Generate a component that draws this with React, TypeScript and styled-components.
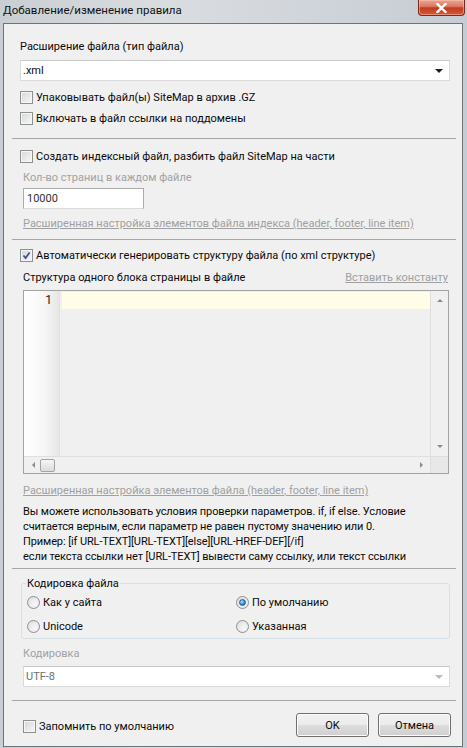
import styled, { createGlobalStyle } from "styled-components";

const GlobalStyle = createGlobalStyle`
  html, body {
    margin: 0;
    padding: 0;
    background: #d3d7db;
  }
  body {
    font-family: Roboto, "Noto Sans", sans-serif;
    font-size: 11px;
    color: #0a0a0a;
  }
`;

const Window = styled.div`
  width: 467px;
  height: 748px;
  box-sizing: border-box;
  display: flex;
  flex-direction: column;
  padding: 0 4px 1px 3px;
  background: linear-gradient(90deg, #c9ced4 0%, #dadde0 35%, #cfd4da 70%, #c6ccd3 100%);
`;

const TitleBar = styled.div`
  height: 23px;
  display: flex;
  align-items: flex-start;
`;

const Title = styled.div`
  font-size: 11.5px;
  line-height: 20px;
  color: #111;
`;

const CloseButton = styled.div`
  margin-left: auto;
  margin-right: -2px;
  width: 47px;
  height: 16px;
  box-sizing: border-box;
  border: 1px solid #7a2a1b;
  border-top: none;
  border-radius: 0 0 4px 4px;
  background: linear-gradient(#eba897 0%, #d9745d 45%, #c23c20 52%, #d4583a 100%);
  box-shadow: inset 0 0 0 1px rgba(255, 200, 180, 0.5);
  display: flex;
  align-items: center;
  justify-content: center;
`;

const Client = styled.div`
  flex: 1;
  display: flex;
  flex-direction: column;
  background: #f0f0f0;
  border: 1px solid #6e7378;
`;

const Section = styled.div<{ $pt?: number }>`
  display: flex;
  flex-direction: column;
  padding: ${(p) => p.$pt ?? 0}px 12px 0 16px;
`;

const Separator = styled.div<{ $mt: number }>`
  margin: ${(p) => p.$mt}px 6px 0 8px;
  border-top: 1px solid #a6a6a6;
`;

const Label = styled.div<{ $mt?: number; $disabled?: boolean; $indent?: boolean }>`
  margin-top: ${(p) => p.$mt ?? 0}px;
  margin-left: ${(p) => (p.$indent ? 3 : 0)}px;
  line-height: 15px;
  color: ${(p) => (p.$disabled ? "#a2a2a2" : "#0a0a0a")};
  white-space: nowrap;
`;

const LinkText = styled.span<{ $mt?: number }>`
  align-self: flex-start;
  margin-top: ${(p) => p.$mt ?? 0}px;
  margin-left: 3px;
  line-height: 15px;
  color: #a0a0a0;
  text-decoration: underline;
  white-space: nowrap;
`;

const Combo = styled.div<{ $mt: number; $disabled?: boolean; $indent?: boolean }>`
  margin-top: ${(p) => p.$mt}px;
  margin-left: ${(p) => (p.$indent ? 3 : 0)}px;
  height: 21px;
  box-sizing: border-box;
  display: flex;
  align-items: center;
  padding: 0 6px 0 2px;
  background: #fff;
  border: 1px solid #dadada;
  border-top-color: #c8c8c8;
  color: ${(p) => (p.$disabled ? "#6d6d6d" : "#0a0a0a")};
`;

const ComboText = styled.span`
  flex: 1;
`;

const Arrow = styled.span<{ $dir: "down" | "up" | "left" | "right"; $color?: string; $size?: number }>`
  width: 0;
  height: 0;
  ${(p) => {
    const s = p.$size ?? 4;
    const c = p.$color ?? "#1e1e1e";
    if (p.$dir === "down")
      return `border-left: ${s}px solid transparent; border-right: ${s}px solid transparent; border-top: ${s}px solid ${c};`;
    if (p.$dir === "up")
      return `border-left: ${s}px solid transparent; border-right: ${s}px solid transparent; border-bottom: ${s}px solid ${c};`;
    if (p.$dir === "left")
      return `border-top: ${s}px solid transparent; border-bottom: ${s}px solid transparent; border-right: ${s}px solid ${c};`;
    return `border-top: ${s}px solid transparent; border-bottom: ${s}px solid transparent; border-left: ${s}px solid ${c};`;
  }}
`;

const CheckRow = styled.label<{ $mt: number; $indent?: boolean }>`
  margin-top: ${(p) => p.$mt}px;
  margin-left: ${(p) => (p.$indent ? 3 : 0)}px;
  height: 16px;
  display: flex;
  align-items: center;
  gap: 3px;
  white-space: nowrap;
`;

const CheckBox = styled.span`
  width: 13px;
  height: 13px;
  box-sizing: border-box;
  flex: none;
  border: 1px solid #8e8f8f;
  background: linear-gradient(135deg, #d4d7db 0%, #f7f7f7 100%);
  box-shadow: inset 0 0 0 1px #f6f6f6;
  display: flex;
  align-items: center;
  justify-content: center;
`;

const TextInput = styled.div`
  margin-top: 3px;
  margin-left: 3px;
  width: 121px;
  height: 21px;
  box-sizing: border-box;
  padding-left: 3px;
  display: flex;
  align-items: center;
  background: #fff;
  border: 1px solid #acacac;
  border-bottom-color: #dadada;
  color: #333;
`;

const HeaderRow = styled.div`
  margin-top: 7px;
  margin-left: 3px;
  padding-right: 2px;
  display: flex;
  justify-content: space-between;
  line-height: 15px;
`;

const Editor = styled.div`
  margin-top: 5px;
  margin-left: 3px;
  margin-right: 1px;
  height: 184px;
  box-sizing: border-box;
  border: 1px solid #a3a3a3;
  display: grid;
  grid-template-columns: 1fr 18px;
  grid-template-rows: 1fr 17px;
  background: #f0f0f0;
`;

const EditorBody = styled.div`
  display: flex;
`;

const Gutter = styled.div`
  width: 36px;
  box-sizing: border-box;
  padding: 1px 7px 0 0;
  text-align: right;
  line-height: 17px;
  font-size: 12px;
  background: linear-gradient(90deg, #ffffff 0%, #f6f6f6 60%, #e6e6e6 100%);
  border-right: 1px solid #e0e0e0;
  color: #222;
`;

const CurrentLine = styled.div`
  flex: 1;
  margin: 1px 0 0 2px;
  height: 17px;
  background: #fffde8;
`;

const VScroll = styled.div`
  border-left: 1px solid #dedede;
  display: flex;
  flex-direction: column;
  align-items: center;
  justify-content: space-between;
  padding: 8px 0 8px;
`;

const HScroll = styled.div`
  border-top: 1px solid #dedede;
  display: flex;
  align-items: center;
  padding: 0 7px 0 8px;
  gap: 5px;
`;

const Thumb = styled.div`
  width: 15px;
  height: 13px;
  box-sizing: border-box;
  border: 1px solid #a3a3a3;
  border-radius: 2px;
  background: linear-gradient(#f5f5f5, #dcdcdc);
  margin-right: auto;
`;

const Corner = styled.div`
  background: #e8e8e8;
  border-top: 1px solid #dedede;
  border-left: 1px solid #dedede;
`;

const Paragraph = styled.p`
  margin: 6px 0 0 3px;
  line-height: 15px;
  letter-spacing: -0.1px;
  white-space: nowrap;
`;

const GroupBox = styled.fieldset`
  margin: 7px 0 0 1px;
  padding: 3px 5px 4px;
  border: 1px solid #d5dfe5;
  border-radius: 3px;
  display: grid;
  grid-template-columns: 209px 1fr;
  row-gap: 8px;
`;

const Legend = styled.legend`
  padding: 0 1px;
  margin-left: -1px;
  line-height: 15px;
`;

const RadioRow = styled.label`
  height: 16px;
  display: flex;
  align-items: center;
  gap: 3px;
  white-space: nowrap;
`;

const RadioCircle = styled.span<{ $checked?: boolean }>`
  width: 13px;
  height: 13px;
  box-sizing: border-box;
  border-radius: 50%;
  border: 1px solid #8e8f8f;
  background: radial-gradient(circle at 65% 65%, #f8f8f8 0%, #dcdcdc 100%);
  display: flex;
  align-items: center;
  justify-content: center;
  &::after {
    content: "";
    display: ${(p) => (p.$checked ? "block" : "none")};
    width: 7px;
    height: 7px;
    box-sizing: border-box;
    border-radius: 50%;
    border: 1px solid #1f5d92;
    background: radial-gradient(circle at 35% 35%, #b8e2ff 0%, #3b8fd6 55%, #13599b 100%);
  }
`;

const BottomRow = styled.div`
  margin-top: 12px;
  margin-left: 3px;
  margin-right: -1px;
  display: flex;
  align-items: center;
  gap: 9px;
`;

const BottomCheck = styled.label`
  flex: 1;
  display: flex;
  align-items: center;
  gap: 3px;
  margin-top: 2px;
`;

const Button = styled.button`
  width: 73px;
  height: 24px;
  box-sizing: border-box;
  border: 1px solid #707070;
  border-radius: 3px;
  background: linear-gradient(#f2f2f2 0%, #ebebeb 49%, #dddddd 51%, #cfcfcf 100%);
  box-shadow: inset 0 0 0 1px #fcfcfc;
  font: inherit;
  color: #0a0a0a;
  padding: 0;
`;

function Check({ checked }: { checked?: boolean }) {
  return (
    <CheckBox>
      {checked && (
        <svg width="9" height="9" viewBox="0 0 9 9">
          <path d="M1.5 4.5 L3.6 7 L7.6 1.4" fill="none" stroke="#3b4f8f" strokeWidth="1.7" />
        </svg>
      )}
    </CheckBox>
  );
}

function App() {
  return (
    <>
      <GlobalStyle />
      <Window>
        <TitleBar>
          <Title>Добавление/изменение правила</Title>
          <CloseButton>
            <svg width="11" height="10" viewBox="0 0 11 10">
              <path d="M1.5 1 L9.5 9 M9.5 1 L1.5 9" stroke="#fff" strokeWidth="2.4" strokeLinecap="square" />
            </svg>
          </CloseButton>
        </TitleBar>
        <Client>
          <Section $pt={15}>
            <Label>Расширение файла (тип файла)</Label>
            <Combo $mt={6}>
              <ComboText>.xml</ComboText>
              <Arrow $dir="down" $size={4} />
            </Combo>
            <CheckRow $mt={8}>
              <Check />
              Упаковывать файл(ы) SiteMap в архив .GZ
            </CheckRow>
            <CheckRow $mt={5}>
              <Check />
              Включать в файл ссылки на поддомены
            </CheckRow>
          </Section>
          <Separator $mt={12} />
          <Section>
            <CheckRow $mt={9}>
              <Check />
              Создать индексный файл, разбить файл SiteMap на части
            </CheckRow>
            <Label $mt={6} $disabled $indent>
              Кол-во страниц в каждом файле
            </Label>
            <TextInput>10000</TextInput>
            <LinkText $mt={7}>
              Расширенная настройка элементов файла индекса (header, footer, line item)
            </LinkText>
          </Section>
          <Separator $mt={8} />
          <Section>
            <CheckRow $mt={7}>
              <Check checked />
              Автоматически генерировать структуру файла (по xml структуре)
            </CheckRow>
            <HeaderRow>
              <span>Структура одного блока страницы в файле</span>
              <LinkText>Вставить константу</LinkText>
            </HeaderRow>
            <Editor>
              <EditorBody>
                <Gutter>1</Gutter>
                <CurrentLine />
              </EditorBody>
              <VScroll>
                <Arrow $dir="up" $size={3} $color="#8a8a8a" />
                <Arrow $dir="down" $size={3} $color="#8a8a8a" />
              </VScroll>
              <HScroll>
                <Arrow $dir="left" $size={3} $color="#8a8a8a" />
                <Thumb />
                <Arrow $dir="right" $size={3} $color="#8a8a8a" />
              </HScroll>
              <Corner />
            </Editor>
            <LinkText $mt={9}>
              Расширенная настройка элементов файла (header, footer, line item)
            </LinkText>
            <Paragraph>
              Вы можете использовать условия проверки параметров. if, if else. Условие
              <br />
              считается верным, если параметр не равен пустому значению или 0.
              <br />
              Пример: [if URL-TEXT][URL-TEXT][else][URL-HREF-DEF][/if]
              <br />
              если текста ссылки нет [URL-TEXT] вывести саму ссылку, или текст ссылки
            </Paragraph>
          </Section>
          <Separator $mt={4} />
          <Section>
            <GroupBox>
              <Legend>Кодировка файла</Legend>
              <RadioRow>
                <RadioCircle />
                Как у сайта
              </RadioRow>
              <RadioRow>
                <RadioCircle $checked />
                По умолчанию
              </RadioRow>
              <RadioRow>
                <RadioCircle />
                Unicode
              </RadioRow>
              <RadioRow>
                <RadioCircle />
                Указанная
              </RadioRow>
            </GroupBox>
            <Label $mt={7} $disabled $indent>
              Кодировка
            </Label>
            <Combo $mt={5} $disabled $indent>
              <ComboText>UTF-8</ComboText>
              <Arrow $dir="down" $size={4} $color="#bcbcbc" />
            </Combo>
          </Section>
          <Separator $mt={13} />
          <Section>
            <BottomRow>
              <BottomCheck>
                <Check />
                Запомнить по умолчанию
              </BottomCheck>
              <Button>OK</Button>
              <Button>Отмена</Button>
            </BottomRow>
          </Section>
        </Client>
      </Window>
    </>
  );
}

export default App;
